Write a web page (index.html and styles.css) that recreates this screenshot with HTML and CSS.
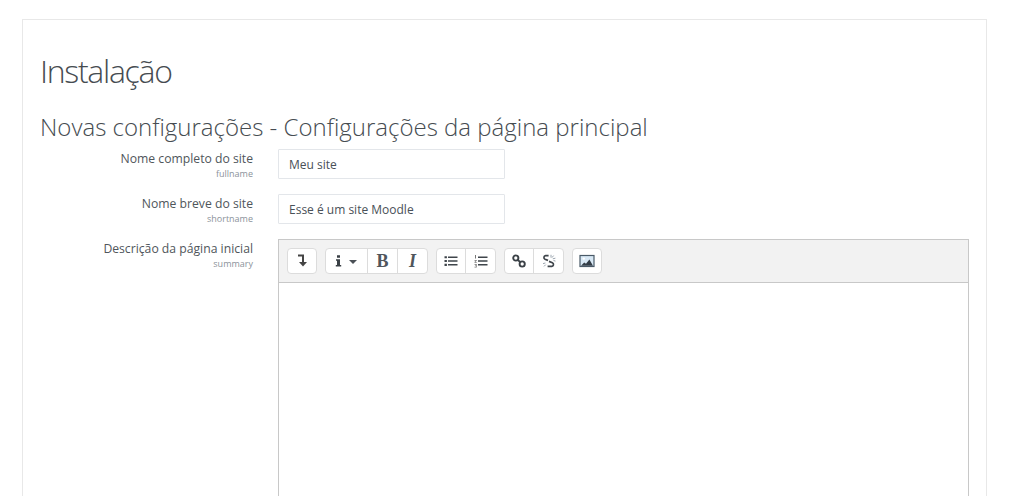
FILE: index.html
```html
<!DOCTYPE html>
<html lang="pt">
<head>
<meta charset="utf-8">
<title>Instalação</title>
<link rel="stylesheet" href="styles.css">
</head>
<body>
<main class="card">
  <h1 class="title">Instalação</h1>
  <h2 class="subtitle">Novas configurações - Configurações da página principal</h2>
  <form class="form">
    <div class="row">
      <div class="label"><span class="name">Nome completo do site</span><span class="key">fullname</span></div>
      <input class="field" type="text" value="Meu site">
    </div>
    <div class="row">
      <div class="label"><span class="name">Nome breve do site</span><span class="key">shortname</span></div>
      <input class="field" type="text" value="Esse é um site Moodle">
    </div>
    <div class="row">
      <div class="label"><span class="name">Descrição da página inicial</span><span class="key">summary</span></div>
      <div class="editor">
        <div class="toolbar">
          <div class="group">
            <button class="btn" type="button"><svg width="14" height="14" viewBox="0 0 14 14"><path d="M3 1.4H8V9" fill="none" stroke="#444" stroke-width="2"/><path d="M4 8h8l-4 4.4z" fill="#444"/></svg></button>
          </div>
          <div class="group">
            <button class="btn wide" type="button"><svg width="26" height="14" viewBox="0 0 26 14"><path d="M3 1.2h3v2.5H3zM2 5.2h4v5.8h1.2v1.5H1.8V11H3V6.7H2z" fill="#3a4046"/><path d="M15 6h8l-4 4z" fill="#4a5056"/></svg></button>
            <button class="btn serif bold" type="button">B</button>
            <button class="btn serif italic" type="button">I</button>
          </div>
          <div class="group">
            <button class="btn" type="button"><svg width="14" height="14" viewBox="0 0 14 14"><path d="M0.5 2.2h2.4v2.1H0.5zM0.5 6h2.4v2.1H0.5zM0.5 9.8h2.4v2.1H0.5zM4 2.4h9.5v1.6H4zM4 6.2h9.5v1.6H4zM4 10h9.5v1.6H4z" fill="#3f454b"/></svg></button>
            <button class="btn" type="button"><svg width="14" height="14" viewBox="0 0 14 14"><path d="M4 2.4h9.5v1.6H4zM4 6.2h9.5v1.6H4zM4 10h9.5v1.6H4z" fill="#3f454b"/><path d="M1 1h1v3.4H1zM0.5 6h2.2v.8L1.4 8h1.3v.7H.5V8l1.3-1.3H.5zM.5 10h2.2v3.4H.5v-.7h1.4v-.7H1v-.6h.9v-.7H.5z" fill="#777"/></svg></button>
          </div>
          <div class="group">
            <button class="btn" type="button"><svg width="14" height="14" viewBox="0 0 14 14"><g fill="none" stroke="#3a4046" stroke-width="1.9"><circle cx="3.8" cy="4" r="2.6"/><circle cx="10.2" cy="10" r="2.6"/><path d="M5.6 5.8l2.8 2.4"/></g></svg></button>
            <button class="btn" type="button"><svg width="14" height="14" viewBox="0 0 14 14"><g fill="none" stroke="#3f454b" stroke-width="1.7"><path d="M6.6 1.6H3.6a1.9 1.9 0 0 0-.6 3.6L6 6.4"/><path d="M7 7.4l3.4 1.4a1.9 1.9 0 0 1-.6 3.6H5.6"/></g><path d="M9 .8v2.8M11.6 1.6L10 3.6M13.4 4.2l-2.6.6M1 9.6l2.4-.6M2 12.4l1.8-1.8M11.5 6.5l2 .6" stroke="#9aa4ae" stroke-width="1" fill="none"/></svg></button>
          </div>
          <div class="group">
            <button class="btn" type="button"><svg width="16" height="14" viewBox="0 0 16 14"><rect x="1" y="1.5" width="14" height="11" fill="#d8e8f5" stroke="#4a5a68" stroke-width="1.2"/><path d="M2 11.8l3.2-3.4 1.8 1.4L10.4 5.6l3.6 6.2z" fill="#333d47"/><circle cx="4.8" cy="4.6" r="1.2" fill="#fff"/></svg></button>
          </div>
        </div>
        <div class="content"></div>
      </div>
    </div>
  </form>
</main>
</body>
</html>
```

FILE: styles.css
```css
* { box-sizing: border-box; }
html, body { margin: 0; height: 496px; overflow: hidden; background: #fff; }
body {
  padding: 19px 37px 0 22px;
  font-family: "Open Sans", "Liberation Sans", sans-serif;
  color: #373a3c;
}
.card {
  border: 1px solid #e8e8e8;
  border-bottom: 0;
  padding: 28px 17px 0 17px;
  height: 477px;
}
.title {
  margin: 0;
  font-size: 32px;
  font-weight: 300;
  letter-spacing: -1.3px;
  line-height: 46px;
  color: #464c51;
}
.subtitle {
  margin: 16px 0 0;
  font-size: 24px;
  font-weight: 300;
  line-height: 34px;
  color: #464c51;
}
.form { margin-top: 5px; }
.row { display: flex; align-items: flex-start; margin-bottom: 15px; }
.row:last-child { margin-bottom: 0; }
.label {
  width: 213px;
  flex: none;
  margin-right: 25px;
  padding-top: 1px;
  text-align: right;
  display: flex;
  flex-direction: column;
}
.name { font-size: 12.2px; line-height: 18px; color: #50565b; }
.key { font-size: 9px; line-height: 11px; color: #8b929a; }
.field {
  width: 227px;
  height: 30px;
  padding: 0 10px;
  border: 1px solid #e3e6ea;
  border-radius: 1px;
  font: 12px "Open Sans", "Liberation Sans", sans-serif;
  color: #495057;
  background: #fff;
}
.editor {
  width: 691px;
  height: 257px;
  border: 1px solid #c8c8c8;
  border-bottom: 0;
  display: flex;
  flex-direction: column;
}
.toolbar {
  height: 43px;
  flex: none;
  background: #f2f2f2;
  border-bottom: 1px solid #c8c8c8;
  display: flex;
  align-items: flex-start;
  gap: 8px;
  padding: 8px 0 0 8px;
}
.group {
  display: flex;
  background: #fff;
  border: 1px solid #dcdcdc;
  border-radius: 4px;
  height: 26px;
}
.btn {
  width: 28px;
  height: 24px;
  padding: 0;
  border: 0;
  background: transparent;
  display: flex;
  align-items: center;
  justify-content: center;
  color: #50565c;
}
.btn + .btn { border-left: 1px solid #dcdcdc; width: 30px; }
.btn.wide { width: 41px; }
.serif { font-family: "Liberation Serif", serif; font-size: 18px; line-height: 1; }
.bold { font-weight: 700; }
.italic { font-style: italic; font-weight: 700; }
.content { flex: 1; background: #fff; }
```
